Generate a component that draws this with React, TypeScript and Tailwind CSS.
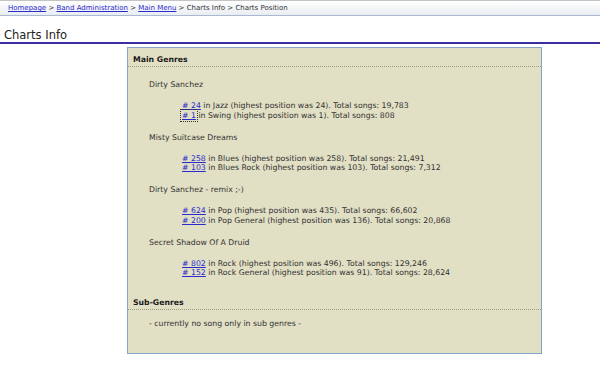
import React from 'react';

type Entry = { rank: string; genre: string; highest: number; total: string; focused?: boolean };
type Song = { title: string; entries: Entry[] };

const songs: Song[] = [
  {
    title: 'Dirty Sanchez',
    entries: [
      { rank: '24', genre: 'Jazz', highest: 24, total: '19,783' },
      { rank: '1', genre: 'Swing', highest: 1, total: '808', focused: true },
    ],
  },
  {
    title: 'Misty Suitcase Dreams',
    entries: [
      { rank: '258', genre: 'Blues', highest: 258, total: '21,491' },
      { rank: '103', genre: 'Blues Rock', highest: 103, total: '7,312' },
    ],
  },
  {
    title: 'Dirty Sanchez - remix ;-)',
    entries: [
      { rank: '624', genre: 'Pop', highest: 435, total: '66,602' },
      { rank: '200', genre: 'Pop General', highest: 136, total: '20,868' },
    ],
  },
  {
    title: 'Secret Shadow Of A Druid',
    entries: [
      { rank: '802', genre: 'Rock', highest: 496, total: '129,246' },
      { rank: '152', genre: 'Rock General', highest: 91, total: '28,624' },
    ],
  },
];

const SectionHeader: React.FC<{ label: string }> = ({ label }) => (
  <div className="px-[5px] pt-[7px] pb-[1px] font-bold text-[#1a1a1a] border-b border-dotted border-[#9c9a84]">
    {label}
  </div>
);

const App: React.FC = () => {
  return (
    <div
      className="min-h-[374px] bg-white text-[7.75px] leading-[10px] text-[#333]"
      style={{ fontFamily: '"DejaVu Sans", Verdana, sans-serif' }}
    >
      {/* Breadcrumb */}
      <div className="h-[16px] border-t border-[#c4c4c4] border-b border-b-[#a9b9d2] bg-gradient-to-b from-white to-[#e9edf2] px-[8px] flex items-center text-[7px] whitespace-pre">
        <a href="#" className="text-[#2b2bcc] underline">Homepage</a>
        <span> &gt; </span>
        <a href="#" className="text-[#2b2bcc] underline">Band Administration</a>
        <span> &gt; </span>
        <a href="#" className="text-[#2b2bcc] underline">Main Menu</a>
        <span> &gt; Charts Info &gt; Charts Position</span>
      </div>

      {/* Title */}
      <div className="mt-[12px] px-[4px] border-b-2 border-[#3b2e9e] text-[11.5px] leading-[14px] text-[#222]">
        Charts Info
      </div>

      {/* Box */}
      <div className="ml-[127px] mt-[3px] w-[415px] h-[307px] border border-[#85a6c6] bg-[#e1dfc4]">
        <SectionHeader label="Main Genres" />
        <div className="pl-[21px] pt-[13px] pb-[1px]">
          {songs.map((song) => (
            <div key={song.title} className="mb-[12.5px]">
              <div>{song.title}</div>
              <div className="pl-[33px] pt-[11px] leading-[9.5px]">
                {song.entries.map((e) => (
                  <div key={e.rank}>
                    <a
                      href="#"
                      className={
                        'text-[#2b2bcc] underline ' +
                        (e.focused
                          ? 'outline outline-1 outline-dotted outline-offset-1 outline-[#333]'
                          : '')
                      }
                    >
                      # {e.rank}
                    </a>{' '}
                    in {e.genre} (highest position was {e.highest}). Total songs: {e.total}
                  </div>
                ))}
              </div>
            </div>
          ))}
        </div>
        <SectionHeader label="Sub-Genres" />
        <div className="pl-[21px] pt-[9px]">- currently no song only in sub genres -</div>
      </div>
    </div>
  );
};

export default App;
